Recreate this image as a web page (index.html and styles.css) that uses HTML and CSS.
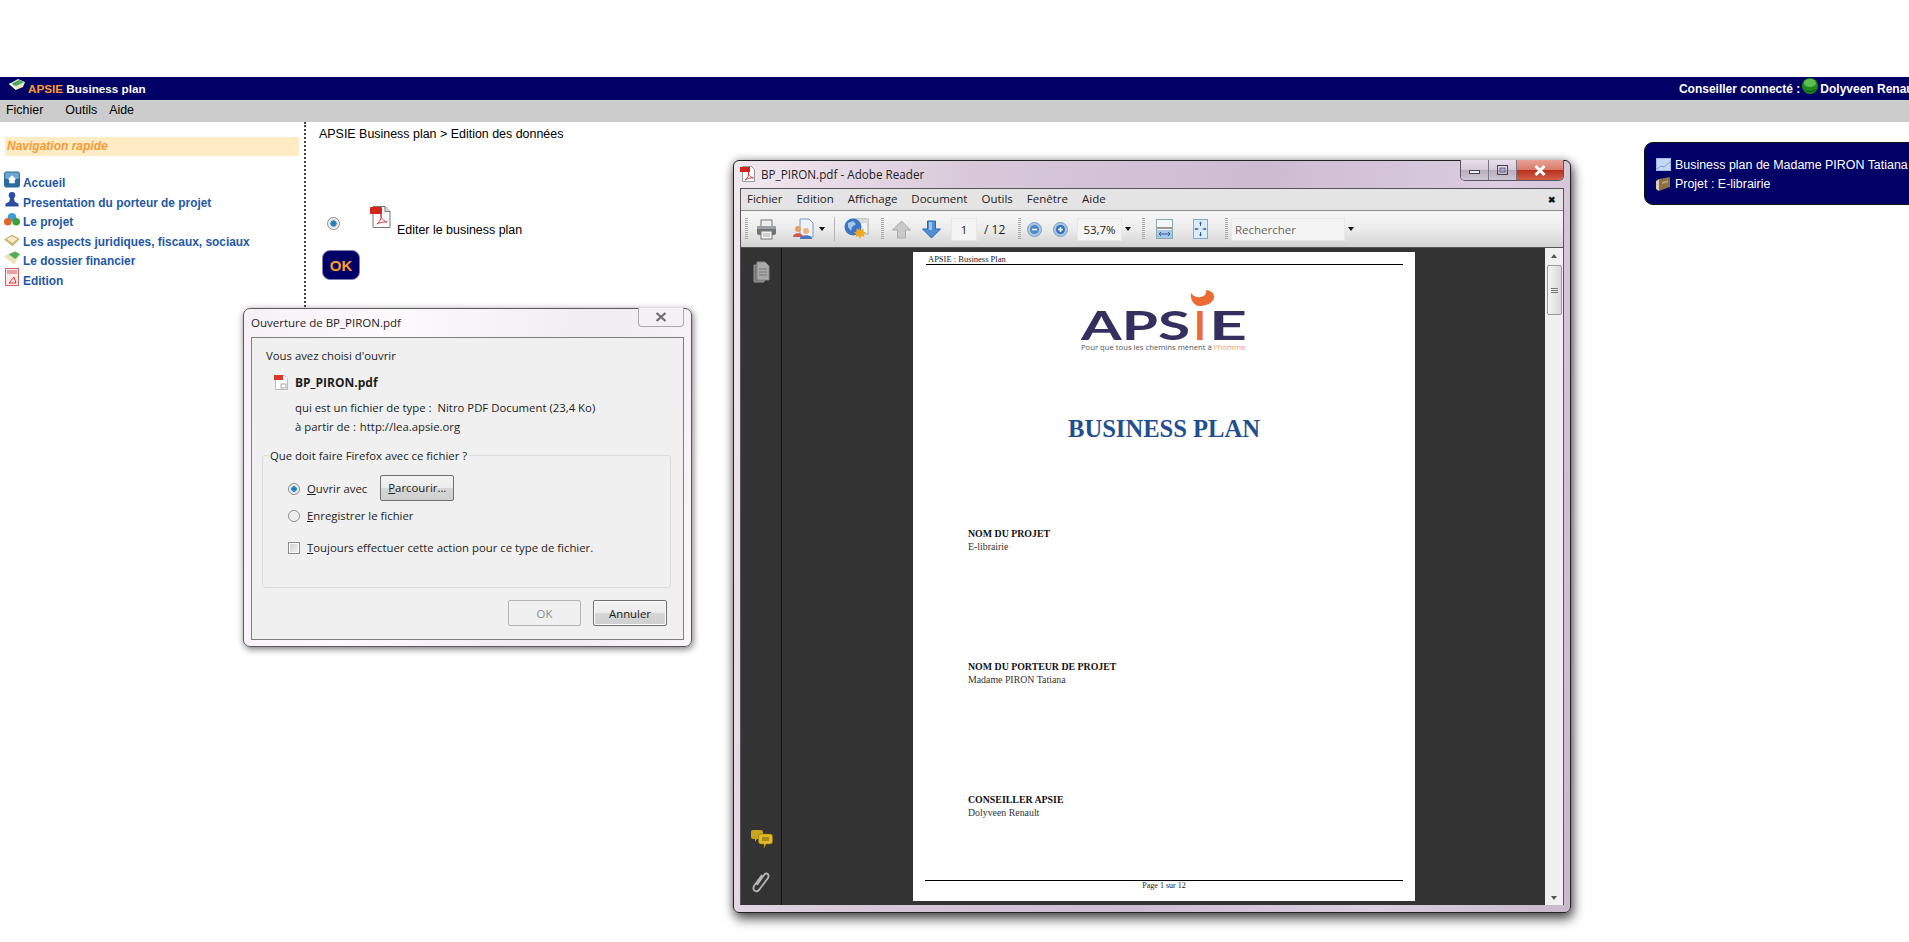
FILE: index.html
```html
<!DOCTYPE html>
<html lang="fr">
<head>
  <meta charset="UTF-8" />
  <title>APSIE Business plan</title>
  <link rel="stylesheet" href="styles.css">
</head>
<body>
<div class="page">

  <!-- bandeau -->
  <div class="topbar">
    <div class="brand">
      <svg class="brand-icon" width="18" height="14" viewBox="0 0 18 14"><path d="M1 6l9-5 7 3-2 5-7 3z" fill="#e8e4c0"/><path d="M3 6l8-4 5 2-8 4z" fill="#4aa860"/><path d="M1 6l7 6 0-2-5-5z" fill="#fff"/></svg>
      <div><span class="orange">APSIE</span> Business plan</div>
    </div>
    <div class="user">
      Conseiller connecté :
      <svg class="led" width="16" height="16" viewBox="0 0 16 16"><circle cx="8" cy="8" r="8" fill="#1d8a1d"/><ellipse cx="8" cy="5" rx="6" ry="4" fill="#5fbf4f"/><path d="M1 10a7 4 0 0 0 14 0 7 3 0 0 1-14 0z" fill="#0d4d0d"/></svg>
      Dolyveen Renault
    </div>
  </div>

  <div class="menubar">
    <span class="menu-fichier">Fichier</span>
    <span class="menu-outils">Outils</span>
    <span class="menu-aide">Aide</span>
  </div>

  <div class="layout">
    <div class="sidebar">
      <div class="nav-title">Navigation rapide</div>
      <ul class="nav">
        <li><svg width="17" height="17" viewBox="0 0 17 17"><rect width="17" height="17" rx="3" fill="#2a6c9e"/><rect x="1" y="1" width="15" height="7" rx="2" fill="#6ba7d0"/><path d="M8.5 4l4.500 4.500h-1.500v4h-6v-4h-1.500z" fill="#fff"/></svg><a>Accueil</a></li>
        <li><svg width="17" height="17" viewBox="0 0 17 17"><circle cx="8.500" cy="4" r="3.500" fill="#2b4fa0"/><path d="M6.500 7h4l1 4 4 2v3h-14v-3l4-2z" fill="#2b4fa0"/></svg><a>Presentation du porteur de projet</a></li>
        <li><svg width="17" height="15" viewBox="0 0 17 15"><circle cx="8.500" cy="5" r="4.500" fill="#3f9fd8"/><circle cx="4" cy="10" r="4" fill="#e0662e"/><circle cx="13" cy="10" r="4" fill="#3fa038"/></svg><a>Le projet</a></li>
        <li><svg width="17" height="13" viewBox="0 0 17 13"><path d="M8.500 0l8.500 5-8 7.500-9-7z" fill="#c9b872"/><path d="M8.500 2l5.500 3-5 4.500-6-4.500z" fill="#f3eccb"/></svg><a>Les aspects juridiques, fiscaux, sociaux</a></li>
        <li><svg width="17" height="15" viewBox="0 0 17 15"><path d="M0 5l11-5 6 3-6 11z" fill="#e7e2b8"/><path d="M5 3l7-3 5 3-5 5z" fill="#52ad5e"/></svg><a>Le dossier financier</a></li>
        <li><svg width="14" height="18" viewBox="0 0 14 18"><rect x=".5" y=".5" width="13" height="17" fill="#fbeaea" stroke="#c66"/><rect x="2" y="2" width="10" height="4" fill="#e8a0a0"/><path d="M4 15l5-6 2 6z" fill="none" stroke="#d33"/></svg><a>Edition</a></li>
      </ul>
    </div>
    <div class="content">
      <div class="breadcrumb">APSIE Business plan &gt; Edition des données</div>
      <div class="choice">
        <span class="radio radio-on"></span>
        <svg class="pdf-big" width="21" height="22" viewBox="0 0 21 22"><path d="M3 .5h12l5 5v16h-17z" fill="#fafafa" stroke="#777"/><path d="M15 .5v5h5" fill="#ddd" stroke="#777"/><rect y="1" width="12" height="7" rx="1" fill="#d3251e"/><path d="M7 18c3-2 5-8 4-10-1 1 1 7 6 8-3 0-7 0-10 2z" fill="none" stroke="#c22" stroke-width=".8"/></svg>
        <span class="choice-label">Editer le business plan</span>
      </div>
      <button class="ok-btn">OK</button>
    </div>
  </div>

  <div class="project-box">
    <div class="project-line">
      <svg width="15" height="13" viewBox="0 0 15 13"><rect width="15" height="13" fill="#9db9e8"/><rect x="1" y="1" width="13" height="11" fill="#c6d7f2"/><path d="M1 11l4-3 3 1 6-5" fill="none" stroke="#7d9fdc"/></svg>
      Business plan de Madame PIRON Tatiana
    </div>
    <div class="project-line">
      <svg width="15" height="14" viewBox="0 0 15 14"><path d="M3 2l11-2v10l-11 4z" fill="#8a6f47"/><path d="M0 4l3-2v12l-3-2z" fill="#d9cfae"/><path d="M6 5l6-1.500v2l-6 1.500z" fill="#b8a27a"/></svg>
      Projet : E-librairie
    </div>
  </div>

  <!-- boite de dialogue Firefox -->
  <div class="dialog">
    <div class="dialog-title">
      <span>Ouverture de BP_PIRON.pdf</span>
      <span class="dialog-close"><svg width="12" height="10" viewBox="0 0 12 10"><path d="M1.500 1l9 8M10.500 1l-9 8" stroke="#6d6d6d" stroke-width="2.200" fill="none"/></svg></span>
    </div>
    <div class="dialog-body">
      <div class="d-intro">Vous avez choisi d'ouvrir</div>
      <div class="d-file">
        <svg width="15" height="15" viewBox="0 0 15 15"><path d="M1.500.5h9l3 3v11h-12z" fill="#fff" stroke="#bbb"/><rect width="9" height="5" fill="#d8392f"/><rect x="7" y="9" width="5" height="4" fill="none" stroke="#aaa"/></svg>
        <b>BP_PIRON.pdf</b>
      </div>
      <div class="d-row d-row-type"><span class="d-key">qui est un fichier de type :</span><span>Nitro PDF Document (23,4 Ko)</span></div>
      <div class="d-row d-row-from"><span class="d-key">à partir de :</span><span>http://lea.apsie.org</span></div>
      <fieldset class="d-group">
        <legend>Que doit faire Firefox avec ce fichier ?</legend>
        <div class="d-opt d-opt-open">
          <span class="radio radio-on"></span><label><u>O</u>uvrir avec</label>
          <button class="win-btn browse"><u>P</u>arcourir...</button>
        </div>
        <div class="d-opt d-opt-save">
          <span class="radio"></span><label><u>E</u>nregistrer le fichier</label>
        </div>
        <div class="d-opt d-opt-always">
          <span class="check"></span><label><u>T</u>oujours effectuer cette action pour ce type de fichier.</label>
        </div>
      </fieldset>
      <div class="d-actions">
        <button class="win-btn win-btn-off">OK</button>
        <button class="win-btn win-btn-def">Annuler</button>
      </div>
    </div>
  </div>

  <!-- fenetre Adobe Reader -->
  <div class="reader">
    <div class="reader-title">
      <svg width="16" height="16" viewBox="0 0 16 16"><path d="M2.500.5h9l3 3v12h-12z" fill="#fff" stroke="#999"/><rect width="10" height="5" y="1" fill="#d3251e"/><path d="M5 14c3-2 4-5 3.500-8-.5 2 1 5 5 6-3 0-6 0-8.500 2z" fill="none" stroke="#c22" stroke-width=".8"/></svg>
      <span>BP_PIRON.pdf - Adobe Reader</span>
      <div class="win-ctrls">
        <span class="ctrl"><svg width="11" height="7" viewBox="0 0 11 7"><rect x=".5" y="3.500" width="10" height="3" fill="#eee" stroke="#445"/></svg></span>
        <span class="ctrl"><svg width="11" height="10" viewBox="0 0 11 10"><rect x=".5" y=".5" width="10" height="9" fill="none" stroke="#445"/><rect x="3" y="3" width="5" height="4" fill="#aac" stroke="#445" stroke-width=".6"/></svg></span>
        <span class="ctrl ctrl-close"><svg width="14" height="11" viewBox="0 0 14 11"><path d="M2.500 1l9 9M11.500 1l-9 9" stroke="#fff" stroke-width="3" fill="none"/></svg></span>
      </div>
    </div>
    <div class="reader-inner">
      <div class="r-menu">
        <span>Fichier</span><span>Edition</span><span>Affichage</span><span>Document</span><span>Outils</span><span>Fenêtre</span><span>Aide</span>
        <b class="r-menu-x">✖</b>
      </div>
      <div class="r-tools">
        <i class="grip"></i>
        <svg class="t-print" width="21" height="21" viewBox="0 0 21 21"><rect x="5" y="1" width="11" height="7" fill="#eee" stroke="#777"/><rect x="1" y="7" width="19" height="9" rx="2" fill="#6f7479"/><rect x="1" y="7" width="19" height="3" rx="1" fill="#9aa0a5"/><rect x="5" y="12" width="11" height="8" fill="#f5f5f5" stroke="#777"/><path d="M7 15h7M7 17h7" stroke="#aaa"/></svg>
        <svg class="t-share" width="22" height="22" viewBox="0 0 22 22"><path d="M8 1h9l4 4v14h-13z" fill="#eef3fa" stroke="#7c9bc4"/><circle cx="6" cy="11" r="3" fill="#e8a06a"/><path d="M1 19c0-5 10-5 10 0z" fill="#d3584a"/><circle cx="14" cy="13" r="3" fill="#f0b27a"/><path d="M8 21c0-5 12-5 12 0z" fill="#4a74c0"/></svg>
        <i class="caret t-caret1"></i>
        <i class="t-sep"></i>
        <svg class="t-globe" width="25" height="24" viewBox="0 0 25 24"><rect x="8" y="2" width="16" height="15" fill="#f4f4f4" stroke="#9aa"/><rect x="8" y="2" width="16" height="4" fill="#d8d8d8"/><circle cx="9" cy="10" r="8.500" fill="#3a76c4"/><path d="M4 6l5-2 3 3-4 3-1 4-3-4z" fill="#a5cbe8"/><path d="M15 10l1.500 3 3-1.500 0 3 3 1-3 1.500 1 3-3-1-1.500 3-1.500-3-3 1 1-3-3-1.500 3-1v-3l3 1.500z" fill="#f0a81e"/></svg>
        <i class="grip t-grip2"></i>
        <svg class="t-up" width="19" height="19" viewBox="0 0 19 19"><path d="M9.500 1l9 9h-5v8h-8v-8h-5z" fill="#c9c9c9" stroke="#aaa"/></svg>
        <svg class="t-down" width="19" height="19" viewBox="0 0 19 19"><path d="M5.500 1h8v8h5l-9 9-9-9h5z" fill="#4f8fd2" stroke="#2f69ad"/><path d="M7 2h3v8h-3z" fill="#9cc6ee"/></svg>
        <span class="t-input t-page">1</span>
        <span class="t-total">/ 12</span>
        <i class="grip t-grip3"></i>
        <svg class="t-minus" width="15" height="15" viewBox="0 0 15 15"><circle cx="7.500" cy="7.500" r="7" fill="#a9c6e2" stroke="#7f9fc0"/><circle cx="7.500" cy="7.500" r="4.500" fill="#4f8ac4"/><path d="M5 7.500h5" stroke="#fff" stroke-width="1.500"/></svg>
        <svg class="t-plus" width="15" height="15" viewBox="0 0 15 15"><circle cx="7.500" cy="7.500" r="7" fill="#a9c6e2" stroke="#7f9fc0"/><circle cx="7.500" cy="7.500" r="4.500" fill="#2f71bf"/><path d="M5 7.500h5M7.500 5v5" stroke="#fff" stroke-width="1.500"/></svg>
        <span class="t-input t-zoom">53,7%</span>
        <i class="caret t-caret2"></i>
        <i class="grip t-grip4"></i>
        <svg class="t-fitw" width="17" height="20" viewBox="0 0 17 20"><rect x=".5" y=".5" width="16" height="19" fill="#f3f5f8" stroke="#8aa"/><rect x="1" y="8" width="15" height="2" fill="#999"/><rect x="1" y="11" width="15" height="8" fill="#a8c8ea"/><path d="M3 15h11M3 15l2-2M3 15l2 2M14 15l-2-2M14 15l-2 2" stroke="#2a5d9c" fill="none"/></svg>
        <svg class="t-fitp" width="15" height="20" viewBox="0 0 15 20"><rect x=".5" y=".5" width="14" height="19" fill="#dcebf8" stroke="#7fa7cf"/><path d="M7.500 3v4M7.500 13v4M2.500 10h3M9.500 10h3" stroke="#2a5d9c"/><path d="M6 4.500l1.500-2 1.500 2zM6 15.500l1.500 2 1.500-2zM3.500 8.500l-2 1.500 2 1.500zM11.500 8.500l2 1.500-2 1.500z" fill="#2a5d9c"/></svg>
        <i class="grip t-grip5"></i>
        <span class="t-input t-search">Rechercher</span>
        <i class="caret t-caret3"></i>
      </div>
      <div class="r-view">
        <div class="r-rail">
          <svg width="18" height="22" viewBox="0 0 18 22"><path d="M2 4h10v17h-10z" fill="#777" stroke="#999"/><path d="M5 1h8l4 4v14h-12z" fill="#aaa" stroke="#888"/><path d="M7 8h8M7 11h8M7 14h8" stroke="#777"/></svg>
          <div class="r-rail-low">
            <svg width="23" height="19" viewBox="0 0 23 19"><path d="M3 1h8a2 2 0 0 1 2 2v5a2 2 0 0 1-2 2h-4l-2 3v-3h-2a2 2 0 0 1-2-2v-5a2 2 0 0 1 2-2z" fill="#c9a51f"/><path d="M11 5h9a2.500 2.500 0 0 1 2.500 2.500v5a2.500 2.500 0 0 1-2.500 2.500h-4l-2 4v-4h-3a2.500 2.500 0 0 1-2.500-2.500v-5a2.500 2.500 0 0 1 2.500-2.500z" fill="#e0bb26" stroke="#8d7412" stroke-width=".6"/><path d="M12 9h7M12 11h7" stroke="#6a570d"/></svg>
            <svg width="20" height="22" viewBox="0 0 20 22"><path d="M6 14l7-10c2-3 6-1 4 3l-9 12c-3 3-7 0-5-4l8-11" fill="none" stroke="#b5b5b5" stroke-width="1.800"/></svg>
          </div>
        </div>
        <div class="r-stage">
          <div class="pdf-page">
            <div class="pdf-head">APSIE : Business Plan</div>
            <div class="pdf-logo">
              <svg width="166" height="60" viewBox="0 0 166 60">
                <path d="M110 3c3 4 7 5 10 4 4-1 6-4 5-7 4 0 9 3 8 8-1 5-8 8-14 8-6 0-10-6-9-13z" fill="#ec6b32"/>
                <text x="0" y="50" font-family="Lato" font-weight="700" font-size="40" textLength="109" lengthAdjust="spacingAndGlyphs" fill="#33305f">APS</text>
                <text x="113" y="50" font-family="Lato" font-weight="700" font-size="40" fill="#ec6b32">I</text>
                <text x="128" y="50" font-family="Lato" font-weight="700" font-size="40" textLength="38" lengthAdjust="spacingAndGlyphs" fill="#33305f">E</text>
              </svg>
              <div class="pdf-tag">Pour que tous les chemins mènent à <span class="tag-orange">l'homme</span></div>
            </div>
            <h1 class="pdf-h1">BUSINESS PLAN</h1>
            <div class="pdf-field pdf-field-1"><b>NOM DU PROJET</b><span>E-librairie</span></div>
            <div class="pdf-field pdf-field-2"><b>NOM DU PORTEUR DE PROJET</b><span>Madame PIRON Tatiana</span></div>
            <div class="pdf-field pdf-field-3"><b>CONSEILLER APSIE</b><span>Dolyveen Renault</span></div>
            <div class="pdf-foot">Page 1 sur 12</div>
          </div>
        </div>
        <div class="r-scroll">
          <i class="arrow-up"></i>
          <div class="thumb"><i></i><i></i><i></i></div>
          <i class="arrow-down"></i>
        </div>
      </div>
    </div>
  </div>

</div>
</body>
</html>
```
FILE: styles.css
```css
html, body {
  margin: 0;
  height: 100%;
  overflow: hidden;
  background: #fff;
}

.page {
  position: relative;
  width: 1924px;
  height: 942px;
  padding-top: 77px;
  box-sizing: border-box;
  font-family: "Liberation Sans", Arial, sans-serif;
  font-size: 12.450px;
  color: #000;
}

.orange { color: #ff9a2e; }

/* bandeau */
.topbar {
  height: 23px;
  background: #000066;
  color: #fff;
  font-size: 12px;
  font-weight: bold;
  display: flex;
  justify-content: space-between;
  align-items: center;
  padding: 0 3px 0 8px;
}

.brand { display: flex; align-items: center; gap: 2px; font-size: 11.700px; }
.brand-icon { margin-top: -7px; }
.user { display: flex; align-items: center; gap: 2px; }
.led { margin-top: -5px; }

.menubar {
  height: 22px;
  box-sizing: border-box;
  padding: 0 0 2px 6px;
  background: #cccccc;
  display: flex;
  align-items: center;
}
.menu-outils { margin-left: 22px; }
.menu-aide { margin-left: 12px; }

.layout { display: flex; }

.sidebar {
  width: 306px;
  height: 200px;
  box-sizing: border-box;
  padding: 15px 5px 0 5px;
  border-right: 2px dotted #444;
  flex: none;
}

.nav-title {
  height: 19px;
  line-height: 19px;
  background: #ffebc4;
  color: #f59a34;
  font-size: 12px;
  font-weight: bold;
  font-style: italic;
  padding-left: 2px;
}

.nav {
  list-style: none;
  margin: 14.500px 0 0 -1px;
  padding: 0;
}
.nav li {
  height: 19.500px;
  display: flex;
  align-items: flex-end;
  gap: 3px;
}
.nav svg { flex: none; margin-bottom: 2px; width: 16px; }
.nav a {
  color: #2358a6;
  font-size: 11.900px;
  font-weight: bold;
  line-height: 14px;
}

.content { padding: 5px 0 0 13px; flex: 1; }
.breadcrumb { line-height: 14px; }

.choice {
  display: flex;
  align-items: flex-end;
  margin-top: 64px;
  padding-left: 8px;
  height: 23px;
}
.choice .radio { margin-bottom: -2px; }
.pdf-big { margin-left: 30px; }
.choice-label { margin-left: 6px; line-height: 13px; position: relative; top: 9px; }

.radio {
  display: inline-block;
  flex: none;
  width: 11px;
  height: 11px;
  border-radius: 50%;
  border: 1px solid #8a8a8a;
  background: radial-gradient(circle, #f4f4f4 0, #dedede 100%);
  box-shadow: inset 0 0 0 1px #fff;
}
.radio-on {
  background: radial-gradient(circle, #1d6fa8 0, #2b93cf 38%, #dcdcdc 42%);
}

.ok-btn {
  display: block;
  margin: 22px 0 0 3px;
  width: 38px;
  height: 30px;
  padding: 0;
  background: #000066;
  border: 1px solid #8080b0;
  border-radius: 8px;
  color: #ff9a2e;
  font: bold 15px "Liberation Sans", Arial, sans-serif;
}

.project-box {
  position: absolute;
  left: 1644px;
  top: 142px;
  width: 300px;
  height: 63px;
  box-sizing: border-box;
  padding: 12px 0 0 11px;
  background: #000066;
  border: 1px solid #111;
  border-radius: 9px;
  color: #fff;
}
.project-line {
  display: flex;
  align-items: center;
  gap: 4px;
  height: 19.500px;
  white-space: nowrap;
}

/* dialogue */
.dialog {
  position: absolute;
  left: 243px;
  top: 308px;
  width: 449px;
  height: 339px;
  box-sizing: border-box;
  padding: 0 7px 7px;
  border: 1px solid #5a5a5a;
  border-radius: 7px;
  background: linear-gradient(100deg, #f7f1f7 0, #fdf9fd 30%, #f2ecf3 70%, #f9f5f9 100%);
  box-shadow: 1px 2px 7px rgba(0, 0, 0, .55);
  font-family: "Open Sans", sans-serif;
  font-size: 11.350px;
  color: #1d1d1d;
}
.dialog-title {
  height: 28px;
  box-sizing: border-box;
  padding-bottom: 2px;
  display: flex;
  align-items: center;
  justify-content: space-between;
  font-size: 11.500px;
  position: relative;
}
.dialog-close {
  position: absolute;
  right: 0;
  top: -1px;
  width: 46px;
  height: 19px;
  box-sizing: border-box;
  border: 1px solid #a9a9a9;
  border-top: none;
  border-radius: 0 0 4px 4px;
  background: #f4f0f5;
  display: flex;
  align-items: center;
  justify-content: center;
}
.dialog-body {
  height: 303px;
  box-sizing: border-box;
  border: 1px solid #7f7f7f;
  background: #f0f0f0;
  padding: 9px 14px 0 14px;
}
.d-intro { line-height: 17px; }
.d-file {
  display: flex;
  align-items: center;
  gap: 6px;
  margin: 10px 0 0 8px;
  height: 17px;
  font-size: 12px;
}
.d-row {
  display: flex;
  line-height: 17px;
  margin-left: 29px;
}
.d-row-type { margin-top: 8px; }
.d-row-type .d-key { margin-right: 6px; }
.d-row-from { margin-top: 2px; }
.d-row-from .d-key { margin-right: 4px; }

.d-group {
  margin: 15px 0 0 -4px;
  padding: 0;
  width: 409px;
  height: 141px;
  box-sizing: border-box;
  border: 1px solid #dcdcdc;
  border-radius: 3px;
  position: relative;
  top: -3px;
}
.d-group legend {
  margin-left: 5px;
  padding: 0 2px;
  line-height: 17px;
}
.d-opt {
  display: flex;
  align-items: center;
  margin-left: 25px;
  height: 17px;
}
.d-opt label { margin-left: 7px; }
.d-opt-open { margin-top: 16px; }
.d-opt-save { margin-top: 10px; }
.d-opt-always { margin-top: 15px; }
.d-opt .radio { width: 10px; height: 10px; }

.check {
  display: inline-block;
  flex: none;
  width: 10px;
  height: 10px;
  border: 1px solid #8a8a8a;
  background: linear-gradient(135deg, #cfcfcf, #f4f4f4);
  box-shadow: inset 0 0 0 1px #fff;
}

.win-btn {
  height: 26px;
  width: 74px;
  padding: 0;
  border: 1px solid #707070;
  border-radius: 2px;
  background: linear-gradient(#f3f3f3 0, #ececec 48%, #d6d6d6 52%, #cfcfcf 100%);
  font-family: "Open Sans", sans-serif;
  font-size: 11.350px;
  color: #1d1d1d;
}
.win-btn-off {
  background: #f0f0f0;
  border-color: #b5b5b5;
  color: #8a8a8a;
  width: 73px;
}
.win-btn-def { margin-left: 12px; box-shadow: inset 0 0 0 1px #fff; }
.browse { margin-left: 13px; position: relative; top: -1px; }

.d-actions {
  display: flex;
  justify-content: flex-end;
  margin: 12px 2px 0 0;
  position: relative;
  top: -3px;
}

/* adobe reader */
.reader {
  position: absolute;
  left: 733px;
  top: 160px;
  width: 838px;
  height: 753px;
  box-sizing: border-box;
  padding: 0 6px 7px;
  border: 1px solid #222;
  border-radius: 6px;
  background: linear-gradient(100deg, #f2e9ef 0, #d8c8da 25%, #cdbbd2 55%, #dccde0 80%, #c9b8cc 100%);
  box-shadow: 2px 6px 12px rgba(0, 0, 0, .65), 0 0 8px rgba(0, 0, 0, .3);
  font-family: "Open Sans", sans-serif;
  font-size: 11.500px;
  color: #1d1d1d;
  display: flex;
  flex-direction: column;
}
.reader-title {
  height: 27px;
  box-sizing: border-box;
  padding-bottom: 2px;
  flex: none;
  display: flex;
  align-items: center;
  gap: 5px;
  font-size: 11.700px;
}
.win-ctrls {
  margin-left: auto;
  align-self: flex-start;
  display: flex;
  height: 20px;
  margin-top: -1px;
  border: 1px solid #556;
  border-top: none;
  border-radius: 0 0 5px 5px;
  overflow: hidden;
}
.ctrl {
  width: 27px;
  display: flex;
  align-items: center;
  justify-content: center;
  background: linear-gradient(#e8e0ea 0, #d5c9d8 50%, #b9adbd 52%, #cfc5d2 100%);
  border-right: 1px solid #778;
}
.ctrl-close {
  width: 46px;
  border-right: none;
  background: linear-gradient(#e8a295 0, #d87b6b 48%, #b8301c 52%, #d2604b 100%);
}

.reader-inner {
  flex: 1;
  min-height: 0;
  display: flex;
  flex-direction: column;
  border: 1px solid #555;
  border-bottom: none;
}
.r-menu {
  flex: none;
  height: 21px;
  box-sizing: content-box;
  background: #e4e4e4;
  border-bottom: 1px solid #8a8a8a;
  display: flex;
  align-items: center;
  gap: 14px;
  padding: 0 7px 0 6px;
  line-height: 18px;
}
.r-menu span { position: relative; top: -1px; }
.r-menu-x { margin-left: auto; font-size: 9px; color: #111; }

.r-tools {
  flex: none;
  height: 37px;
  box-sizing: border-box;
  background: linear-gradient(#f7f7f7 0, #ececec 50%, #d2d2d2 100%);
  border-bottom: 1px solid #555;
  display: flex;
  align-items: center;
  padding-left: 4px;
}
.grip {
  width: 3px;
  height: 22px;
  flex: none;
  background: repeating-linear-gradient(#aaa 0, #aaa 1px, transparent 1px, transparent 2px);
}
.caret {
  width: 0;
  height: 0;
  flex: none;
  border: 3px solid transparent;
  border-top: 4px solid #111;
  border-bottom: none;
}
.t-input {
  flex: none;
  height: 23px;
  line-height: 23px;
  background: #f4f4f4;
  box-sizing: border-box;
  box-shadow: inset 0 0 0 1px #e8e8e8;
}
.t-print { margin-left: 8px; }
.t-share { margin-left: 15px; }
.t-caret1 { margin-left: 5px; }
.t-sep { width: 1px; height: 24px; background: #b5b5b5; margin-left: 9px; flex: none; }
.t-globe { margin-left: 9px; }
.t-grip2 { margin-left: 12px; }
.t-up { margin-left: 8px; }
.t-down { margin-left: 11px; }
.t-page { width: 26px; margin-left: 10px; text-align: center; }
.t-total { margin-left: 7px; width: 23px; flex: none; font-size: 12px; }
.t-grip3 { margin-left: 11px; }
.t-minus { margin-left: 6px; }
.t-plus { margin-left: 11px; }
.t-zoom { width: 45px; margin-left: 9px; text-align: center; }
.t-caret2 { margin-left: 3px; }
.t-grip4 { margin-left: 11px; }
.t-fitw { margin-left: 11px; }
.t-fitp { margin-left: 20px; }
.t-grip5 { margin-left: 17px; }
.t-search { width: 114px; margin-left: 3px; padding-left: 4px; color: #666; }
.t-caret3 { margin-left: 3px; }

.r-view {
  flex: 1;
  min-height: 0;
  display: flex;
  background: #333333;
}
.r-rail {
  width: 41px;
  flex: none;
  box-sizing: border-box;
  border-right: 1px solid #111;
  display: flex;
  flex-direction: column;
  align-items: center;
  padding-top: 13px;
}
.r-rail-low {
  margin-top: auto;
  margin-bottom: 12px;
  display: flex;
  flex-direction: column;
  align-items: center;
  gap: 23px;
}
.r-stage { flex: 1; padding: 4px 0 0 131px; }

.pdf-page {
  position: relative;
  width: 502px;
  height: 649px;
  background: #fff;
  font-family: "Liberation Serif", "Times New Roman", serif;
  font-size: 9.850px;
  color: #222;
}
.pdf-head {
  margin: 0 12px 0 13px;
  padding: 3px 0 0 2px;
  height: 9px;
  border-bottom: 1px solid #000;
  line-height: 9px;
  font-size: 8.500px;
}
.pdf-logo {
  width: 166px;
  margin: 25px auto 0;
}
.pdf-logo svg { display: block; }
.pdf-tag {
  font-family: "Open Sans", sans-serif;
  font-size: 7.700px;
  line-height: 11px;
  color: #555;
  white-space: nowrap;
  margin-top: -8px;
}
.tag-orange { color: #f0a070; }
.pdf-h1 {
  margin: 61px 0 0;
  font-size: 24.600px;
  line-height: 30px;
  font-weight: bold;
  text-align: center;
  color: #1f4f8f;
  position: relative;
  left: 0;
}
.pdf-field {
  position: absolute;
  left: 55px;
  line-height: 13px;
}
.pdf-field b, .pdf-field span { display: block; color: #111; }
.pdf-field span { color: #333; }
.pdf-field-1 { top: 275px; }
.pdf-field-2 { top: 408px; }
.pdf-field-3 { top: 541px; }
.pdf-foot {
  position: absolute;
  left: 12px;
  right: 12px;
  top: 628px;
  border-top: 1px solid #000;
  text-align: center;
  font-size: 8px;
  line-height: 10px;
}

.r-scroll {
  width: 18px;
  flex: none;
  background: #f0f0f0;
  display: flex;
  flex-direction: column;
  align-items: center;
  padding-top: 6px;
  box-sizing: border-box;
}
.arrow-up {
  width: 0;
  height: 0;
  border: 3px solid transparent;
  border-bottom: 4px solid #555;
  border-top: none;
}
.arrow-down {
  width: 0;
  height: 0;
  margin-top: auto;
  margin-bottom: 5px;
  border: 3px solid transparent;
  border-top: 4px solid #555;
  border-bottom: none;
}
.thumb {
  margin-top: 7px;
  width: 15px;
  height: 50px;
  box-sizing: border-box;
  border: 1px solid #9a9a9a;
  border-radius: 2px;
  background: linear-gradient(90deg, #f4f4f4, #d9d9d9);
  display: flex;
  flex-direction: column;
  align-items: center;
  justify-content: center;
  gap: 1px;
}
.thumb i { width: 7px; height: 1px; background: #777; }
```
